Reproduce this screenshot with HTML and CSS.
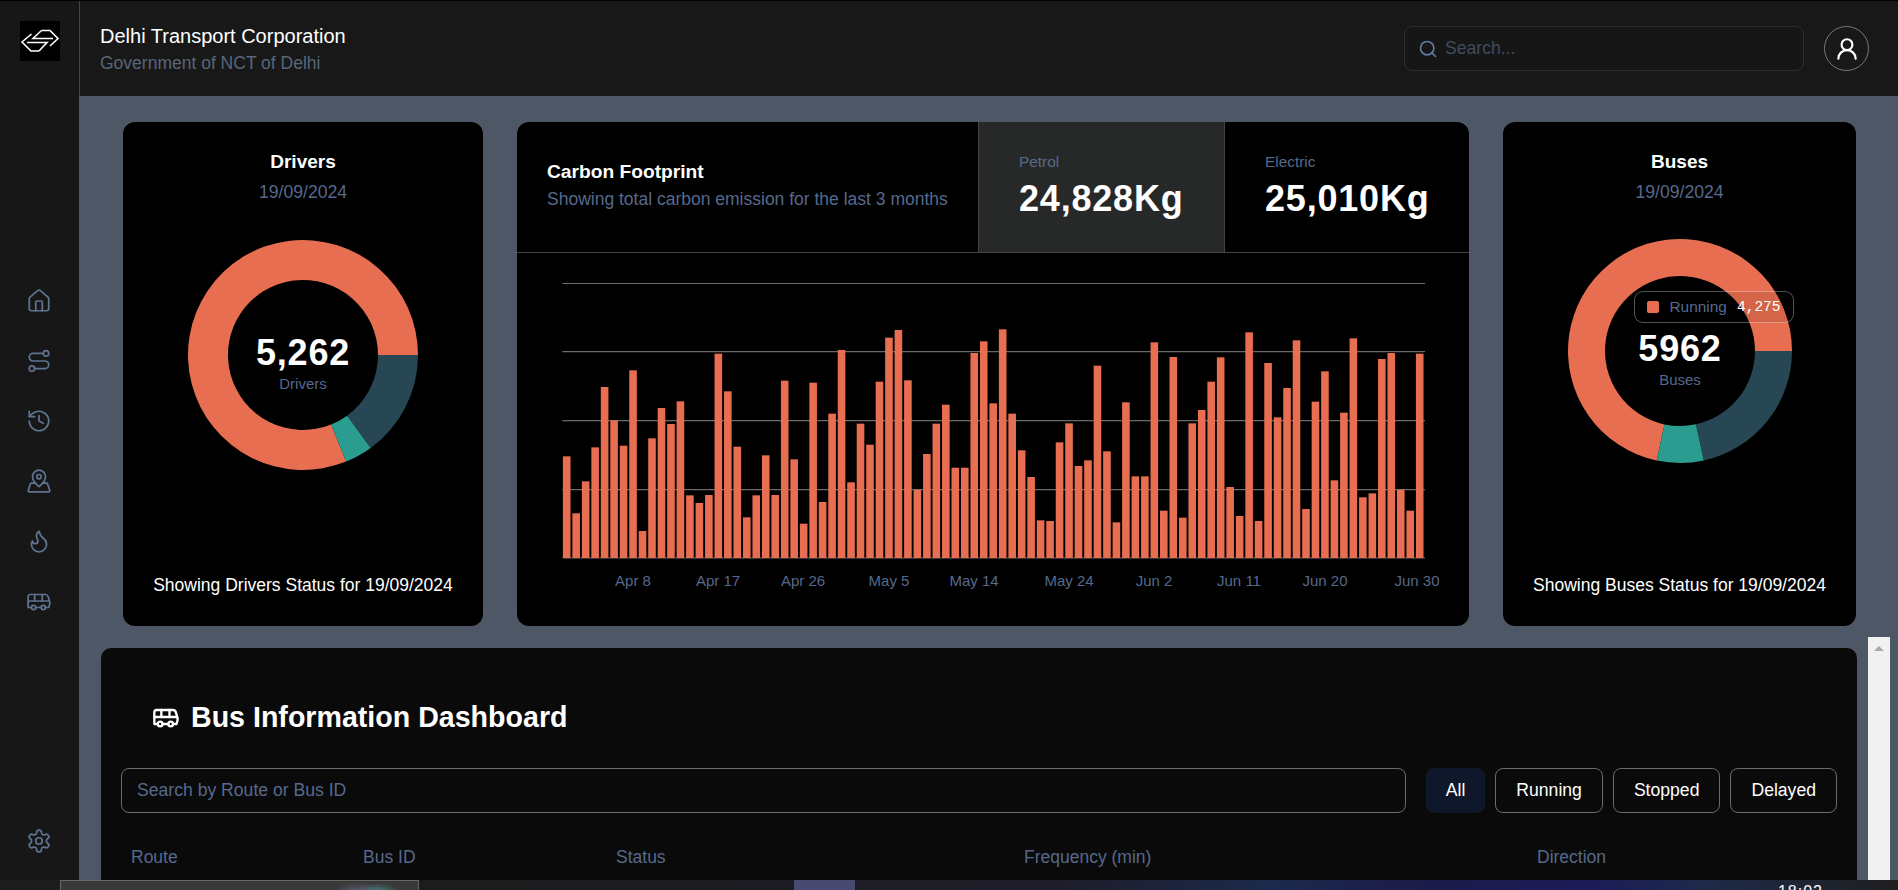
FILE: index.html
```html
<!DOCTYPE html>
<html lang="en">
<head>
  <meta charset="UTF-8">
  <meta name="viewport" content="width=device-width, initial-scale=1">
  <title>Delhi Transport Corporation</title>
  <link rel="stylesheet" href="styles.css">
</head>
<body>
<div class="app">
  <aside class="sidebar">
    <div class="logo">
      <svg viewBox="0 0 40 40" width="40" height="40" fill="none" stroke="#fff" stroke-width="1.6">
        <path d="M21.500 9.500H30L38 17.500 30 25"/>
        <path d="M11.500 13 2 21l9 9h8"/>
        <path d="M21.500 9.500 13 17.500h20"/>
        <path d="M7 21.500h20L19 30"/>
      </svg>
    </div>
    <nav class="nav">
      <a href="#home"><svg class="icon" viewBox="0 0 24 24"><path d="M15 21v-8a1 1 0 0 0-1-1h-4a1 1 0 0 0-1 1v8"/><path d="M3 10a2 2 0 0 1 .709-1.528l7-5.999a2 2 0 0 1 2.582 0l7 5.999A2 2 0 0 1 21 10v9a2 2 0 0 1-2 2H5a2 2 0 0 1-2-2z"/></svg></a>
      <a href="#routes"><svg class="icon" viewBox="0 0 24 24"><circle cx="5.500" cy="19" r="2.500"/><path d="M8 19h9.500a3.500 3.500 0 0 0 0-7h-11a3.500 3.500 0 0 1 0-7H16"/><circle cx="18.500" cy="5" r="2.500"/></svg></a>
      <a href="#history"><svg class="icon" viewBox="0 0 24 24"><path d="M3 12a9 9 0 1 0 9-9 9.750 9.750 0 0 0-6.740 2.740L3 8"/><path d="M3 3v5h5"/><path d="M12 7v5l4 2"/></svg></a>
      <a href="#map"><svg class="icon" viewBox="0 0 24 24"><path d="M18 8c0 3.613-3.869 7.429-5.393 8.795a1 1 0 0 1-1.214 0C9.870 15.429 6 11.613 6 8a6 6 0 0 1 12 0"/><circle cx="12" cy="8" r="2"/><path d="M8.714 14h-3.710a1 1 0 0 0-.948.683l-2.004 6A1 1 0 0 0 3 22h18a1 1 0 0 0 .948-1.316l-2-6a1 1 0 0 0-.949-.684h-3.712"/></svg></a>
      <a href="#emissions"><svg class="icon" viewBox="0 0 24 24"><path d="M8.500 14.500A2.500 2.500 0 0 0 11 12c0-1.380-.5-2-1-3-1.072-2.143-.224-4.054 2-6 .5 2.500 2 4.900 4 6.500 2 1.600 3 3.500 3 5.500a7 7 0 1 1-14 0c0-1.153.433-2.294 1-3a2.500 2.500 0 0 0 2.500 2.500z"/></svg></a>
      <a href="#buses"><svg class="icon" viewBox="0 0 24 24"><path d="M8 6v6"/><path d="M15 6v6"/><path d="M2 12h19.600"/><path d="M18 18h3s.5-1.700.8-2.800c.1-.4.2-.8.2-1.200 0-.4-.1-.8-.2-1.200l-1.400-5C20.100 6.800 19.100 6 18 6H4a2 2 0 0 0-2 2v10h3"/><circle cx="7" cy="18" r="2"/><path d="M9 18h5"/><circle cx="16" cy="18" r="2"/></svg></a>
    </nav>
    <a class="settings" href="#settings"><svg class="icon" viewBox="0 0 24 24"><path d="M12.220 2h-.44a2 2 0 0 0-2 2v.18a2 2 0 0 1-1 1.730l-.43.25a2 2 0 0 1-2 0l-.15-.08a2 2 0 0 0-2.730.73l-.22.38a2 2 0 0 0 .73 2.730l.15.1a2 2 0 0 1 1 1.720v.51a2 2 0 0 1-1 1.740l-.15.09a2 2 0 0 0-.73 2.730l.22.38a2 2 0 0 0 2.730.73l.15-.08a2 2 0 0 1 2 0l.43.25a2 2 0 0 1 1 1.730V20a2 2 0 0 0 2 2h.44a2 2 0 0 0 2-2v-.18a2 2 0 0 1 1-1.730l.43-.25a2 2 0 0 1 2 0l.15.08a2 2 0 0 0 2.730-.73l.22-.39a2 2 0 0 0-.73-2.730l-.15-.08a2 2 0 0 1-1-1.740v-.5a2 2 0 0 1 1-1.740l.15-.09a2 2 0 0 0 .73-2.730l-.22-.38a2 2 0 0 0-2.730-.73l-.15.08a2 2 0 0 1-2 0l-.43-.25a2 2 0 0 1-1-1.730V4a2 2 0 0 0-2-2z"/><circle cx="12" cy="12" r="3"/></svg></a>
  </aside>

  <div class="page">
    <header class="topbar">
      <div class="brand">
        <h1>Delhi Transport Corporation</h1>
        <p>Government of NCT of Delhi</p>
      </div>
      <label class="search">
        <svg class="search-icon" viewBox="0 0 24 24"><circle cx="11" cy="11" r="8"/><path d="m21 21-4.300-4.300"/></svg>
        <input type="text" placeholder="Search...">
      </label>
      <button class="avatar" type="button" aria-label="Account">
        <svg viewBox="0 0 24 24" width="26" height="26"><circle cx="12" cy="8" r="5"/><path d="M20 21a8 8 0 0 0-16 0"/></svg>
      </button>
    </header>

    <main class="content">
      <section class="cards">
        <article class="card donut-card">
          <h2>Drivers</h2>
          <p class="muted date">19/09/2024</p>
          <svg class="donut donut-drivers" viewBox="-120 -120 240 240" width="240" height="240">
            <path class="slice-orange" d="M43.100 106.600A115 115 0 1 1 115 0L75 0A75 75 0 1 0 28.100 69.500Z"/>
            <path class="slice-dark" d="M115 0A115 115 0 0 1 67.600 93L44.100 60.700A75 75 0 0 0 75 0Z"/>
            <path class="slice-teal" d="M67.600 93A115 115 0 0 1 43.100 106.600L28.100 69.500A75 75 0 0 0 44.100 60.700Z"/>
            <text class="donut-value" y="10">5,262</text>
            <text class="donut-label" y="34">Drivers</text>
          </svg>
          <p class="caption">Showing Drivers Status for 19/09/2024</p>
        </article>

        <article class="card carbon-card">
          <div class="carbon-head">
            <div class="carbon-title">
              <h3>Carbon Footprint</h3>
              <p class="muted">Showing total carbon emission for the last 3 months</p>
            </div>
            <div class="stat stat-active">
              <span class="muted">Petrol</span>
              <strong>24,828Kg</strong>
            </div>
            <div class="stat">
              <span class="muted">Electric</span>
              <strong>25,010Kg</strong>
            </div>
          </div>
          <svg class="chart" id="carbon-chart" viewBox="0 0 952 373" width="952" height="373"></svg>
        </article>

        <article class="card donut-card">
          <h2>Buses</h2>
          <p class="muted date">19/09/2024</p>
          <div class="donut-wrap">
            <svg class="donut donut-buses" viewBox="-120 -120 240 240" width="240" height="240">
              <path class="slice-orange" d="M-23.300 109.500A112 112 0 1 1 112 0L75 0A75 75 0 1 0 -15.600 73.400Z"/>
              <path class="slice-dark" d="M112 0A112 112 0 0 1 23.800 109.400L15.900 73.300A75 75 0 0 0 75 0Z"/>
              <path class="slice-teal" d="M23.800 109.400A112 112 0 0 1 -23.300 109.500L-15.600 73.400A75 75 0 0 0 15.900 73.300Z"/>
              <text class="donut-value" y="10">5962</text>
              <text class="donut-label" y="34">Buses</text>
            </svg>
            <div class="tooltip">
              <i class="swatch"></i>
              <span class="tooltip-name">Running</span>
              <span class="tooltip-value">4,275</span>
            </div>
          </div>
          <p class="caption">Showing Buses Status for 19/09/2024</p>
        </article>
      </section>

      <div class="lower">
        <section class="panel">
          <h2 class="panel-title">
            <svg viewBox="0 0 24 24" width="28" height="28"><path d="M8 6v6"/><path d="M15 6v6"/><path d="M2 12h19.600"/><path d="M18 18h3s.5-1.700.8-2.800c.1-.4.2-.8.2-1.200 0-.4-.1-.8-.2-1.200l-1.400-5C20.100 6.800 19.100 6 18 6H4a2 2 0 0 0-2 2v10h3"/><circle cx="7" cy="18" r="2"/><path d="M9 18h5"/><circle cx="16" cy="18" r="2"/></svg>
            Bus Information Dashboard
          </h2>
          <div class="filters">
            <input class="filter-search" type="text" placeholder="Search by Route or Bus ID">
            <button class="filter filter-active" type="button">All</button>
            <button class="filter" type="button">Running</button>
            <button class="filter" type="button">Stopped</button>
            <button class="filter" type="button">Delayed</button>
          </div>
          <div class="table-head">
            <span>Route</span>
            <span>Bus ID</span>
            <span>Status</span>
            <span>Frequency (min)</span>
            <span>Direction</span>
          </div>
        </section>
        <div class="scrollbar"><i></i></div>
      </div>
    </main>
  </div>
</div>
<footer class="taskbar">
  <div class="task-preview"></div>
  <div class="task-tile"></div>
  <span class="clock">18:02</span>
</footer>
<script src="chart.js"></script>
</body>
</html>
```

FILE: styles.css
```css
:root {
  --muted: #56698c;
  --orange: #e76e50;
  --teal: #2a9d90;
  --dark: #274754;
  --page-bg: #4e5766;
  --bar-bg: #181818;
}
* { box-sizing: border-box; margin: 0; padding: 0; }
html, body { height: 100%; overflow: hidden; }
body {
  font-family: "Liberation Sans", Arial, sans-serif;
  display: flex;
  flex-direction: column;
  background: var(--page-bg);
  color: #fff;
  border-top: 1px solid #000;
}
.muted { color: var(--muted); }
.icon, .panel-title svg, .avatar svg, .search-icon {
  fill: none;
  stroke: currentColor;
  stroke-width: 2;
  stroke-linecap: round;
  stroke-linejoin: round;
}

.app { flex: 1; display: flex; min-height: 0; }

/* sidebar */
.sidebar {
  width: 79px;
  flex: none;
  background: #171717;
  display: flex;
  flex-direction: column;
  padding: 20px 0 26px;
}
.logo { width: 40px; height: 40px; background: #000; margin-left: 20px; }
.logo svg { display: block; }
.nav { display: flex; flex-direction: column; gap: 34px; margin: 227px 0 0 26px; }
.nav a, .settings { display: block; height: 26px; color: #5f7491; }
.settings { margin: auto 0 0 26px; }
.icon { width: 26px; height: 26px; display: block; stroke-width: 1.6; }

.page { flex: 1; min-width: 0; display: flex; flex-direction: column; }

/* header */
.topbar {
  height: 95px;
  flex: none;
  background: var(--bar-bg);
  border-left: 1px solid #444;
  display: flex;
  align-items: center;
  padding: 0 29px 0 20px;
}
.brand { flex: 1; }
.brand h1 { font-size: 20px; font-weight: 400; line-height: 24px; padding-top: 1px; }
.brand p { font-size: 17.500px; line-height: 24px; margin-top: 3px; color: #586678; }
.search {
  width: 400px;
  height: 45px;
  border: 1px solid #2e2e2e;
  border-radius: 8px;
  background: #161616;
  display: flex;
  align-items: center;
  padding-left: 13px;
  margin-right: 20px;
}
.search-icon { width: 20px; height: 20px; color: #5f7c9c; flex: none; }
.search input {
  flex: 1;
  background: none;
  border: 0;
  outline: 0;
  margin-left: 7px;
  font: 17.600px "Liberation Sans", Arial, sans-serif;
  color: #fff;
}
.search input::placeholder { color: #414c5c; }
.avatar {
  width: 45px;
  height: 45px;
  border: 1px solid #777;
  border-radius: 50%;
  background: none;
  color: #fff;
  display: flex;
  align-items: center;
  justify-content: center;
}

/* top cards */
.content { flex: 1; min-height: 0; overflow: hidden; }
.cards {
  display: grid;
  grid-template-columns: 360px 952px 353px;
  column-gap: 34px;
  height: 504px;
  margin: 26px 0 22px 44px;
}
.card { background: #000; border-radius: 12px; overflow: hidden; }
.donut-card {
  display: flex;
  flex-direction: column;
  align-items: center;
  padding-top: 29px;
}
.donut-card h2 { font-size: 19px; font-weight: 700; line-height: 22px; }
.date { font-size: 17.600px; line-height: 22px; margin-top: 8px; }
.donut { display: block; }
.donut-drivers { margin-top: 32px; }
.donut-wrap { position: relative; margin-top: 28px; }
.slice-orange { fill: var(--orange); }
.slice-dark { fill: var(--dark); }
.slice-teal { fill: var(--teal); }
.donut-value {
  fill: #fff;
  font-size: 36px;
  font-weight: 700;
  text-anchor: middle;
  letter-spacing: .8px;
}
.donut-label { fill: var(--muted); font-size: 15px; text-anchor: middle; }
.caption { margin-top: auto; margin-bottom: 31px; font-size: 17.500px; line-height: 20px; }
.tooltip {
  position: absolute;
  left: 74px;
  top: 60px;
  width: 160px;
  height: 32px;
  border: 1px solid rgba(255, 255, 255, .32);
  border-radius: 9px;
  background: rgba(0, 0, 0, .08);
  display: flex;
  align-items: center;
  padding: 0 12px;
  font-size: 15.400px;
}
.swatch { width: 12px; height: 12px; border-radius: 2px; background: var(--orange); }
.tooltip-name { color: var(--muted); margin-left: 11px; }
.tooltip-value { margin-left: auto; font-family: "Liberation Mono", monospace; font-size: 14.500px; }

/* carbon footprint */
.carbon-head { display: flex; height: 131px; border-bottom: 1px solid #444; }
.carbon-title {
  flex: 1;
  display: flex;
  flex-direction: column;
  justify-content: center;
  padding: 0 0 3px 30px;
}
.carbon-title h3 { font-size: 19.200px; font-weight: 700; line-height: 24px; }
.carbon-title p { font-size: 17.500px; line-height: 24px; margin-top: 3px; }
.stat {
  width: 245px;
  flex: none;
  border-left: 1px solid #444;
  padding: 30px 0 0 40px;
}
.stat-active { width: 246px; background: #272929; }
.stat span { display: block; font-size: 15.400px; line-height: 20px; }
.stat strong { display: block; font-size: 36px; line-height: 40px; margin-top: 7px; letter-spacing: .8px; }
.chart { display: block; }
.grid-line { stroke: #6a6a6a; stroke-width: 1.2; }
.bar { fill: var(--orange); }
.tick { fill: var(--muted); font-size: 15px; text-anchor: middle; }

/* bus table panel */
.lower { display: flex; align-items: stretch; height: 300px; }
.panel {
  width: 1756px;
  flex: none;
  margin-left: 22px;
  padding: 53px 20px 0;
  background: #0a0a0a;
  border-radius: 10px 10px 0 0;
}
.panel-title {
  display: flex;
  align-items: center;
  gap: 11px;
  padding-left: 31px;
  font-size: 28.600px;
  line-height: 32px;
  font-weight: 700;
}
.filters { display: flex; gap: 10px; margin-top: 35px; }
.filter-search {
  flex: 1;
  height: 45px;
  min-width: 0;
  margin-right: 10px;
  padding: 0 15px;
  background: none;
  border: 1px solid #6b6b6b;
  border-radius: 8px;
  outline: 0;
  color: #fff;
  font: 17.600px "Liberation Sans", Arial, sans-serif;
}
.filter-search::placeholder { color: var(--muted); }
.filter {
  height: 45px;
  padding: 0 20px;
  background: none;
  border: 1px solid #6b6b6b;
  border-radius: 8px;
  color: #fff;
  font: 17.600px "Liberation Sans", Arial, sans-serif;
}
.filter-active { background: #0f172a; border-color: #0f172a; padding: 0 19px; }
.table-head {
  display: grid;
  grid-template-columns: 232px 253px 408px 513px 1fr;
  margin-top: 34px;
  padding-left: 10px;
  font-size: 17.500px;
  line-height: 20px;
  color: var(--muted);
}
.scrollbar {
  width: 22px;
  flex: none;
  margin: -11px 0 0 11px;
  background: #f1f1f1;
  padding: 9px 0 0 6px;
}
.scrollbar i {
  display: block;
  width: 0;
  height: 0;
  border-left: 5px solid transparent;
  border-right: 5px solid transparent;
  border-bottom: 5px solid #a8a8a8;
}

/* screen edge below the window */
.taskbar {
  height: 10px;
  flex: none;
  display: flex;
  overflow: hidden;
  background: linear-gradient(90deg, #1c1c1c 0, #1c1c1c 22%, #1f1c28 55%, #1b2a4c 67%, #1d1b4a 75%, #1c1c58 84%, #1d2a48 90%, #1f1f1f 100%);
}
.task-preview {
  width: 359px;
  margin-left: 60px;
  flex: none;
  background:
    radial-gradient(ellipse 22px 12px at 318px 14px, #3f9488 0, rgba(63, 148, 136, 0) 100%),
    radial-gradient(ellipse 28px 13px at 298px 14px, #6a6488 0, rgba(106, 100, 136, 0) 100%),
    #393939;
  border: 1px solid #666;
  border-bottom: 0;
}
.task-tile { width: 61px; margin-left: 375px; flex: none; background: #4a4a70; }
.clock {
  margin-left: auto;
  margin-right: 75px;
  padding-top: 3px;
  font-size: 16px;
  line-height: 18px;
  letter-spacing: 1px;
}
```

FILE: chart.js
```js
// bar tops are read off the chart at 3x, baseline sits at 864
var tops = [559,730,634,532,351,451,527,301,783,505,414,462,394,676,699,675,251,364,530,742,676,556,675,332,568,761,338,696,431,240,637,461,524,335,203,180,331,659,552,461,404,593,593,249,214,400,178,431,541,621,751,753,517,460,588,571,287,544,757,397,619,619,217,722,261,743,460,420,335,262,651,738,187,753,279,442,354,211,717,395,304,631,428,205,682,670,267,249,659,722,251];
var grid = [30.5, 98.7, 167.7, 236.7, 305];
var ticks = [["Apr 8",116],["Apr 17",201],["Apr 26",286],["May 5",372],["May 14",457],["May 24",552],["Jun 2",637],["Jun 11",722],["Jun 20",808],["Jun 30",900]];

var svg = document.getElementById("carbon-chart");
var NS = "http://www.w3.org/2000/svg";

function add(tag, attrs, text) {
  var el = document.createElementNS(NS, tag);
  for (var k in attrs) el.setAttribute(k, attrs[k]);
  if (text) el.textContent = text;
  svg.appendChild(el);
}

grid.forEach(function (y) {
  add("line", { "class": "grid-line", x1: 45.3, x2: 908, y1: y, y2: y });
});
tops.forEach(function (top, i) {
  var h = (864 - top) / 3;
  add("rect", { "class": "bar", x: 45.9 + i * 9.478, y: 305 - h, width: 7.6, height: h });
});
ticks.forEach(function (t) {
  add("text", { "class": "tick", x: t[1], y: 333 }, t[0]);
});
```
